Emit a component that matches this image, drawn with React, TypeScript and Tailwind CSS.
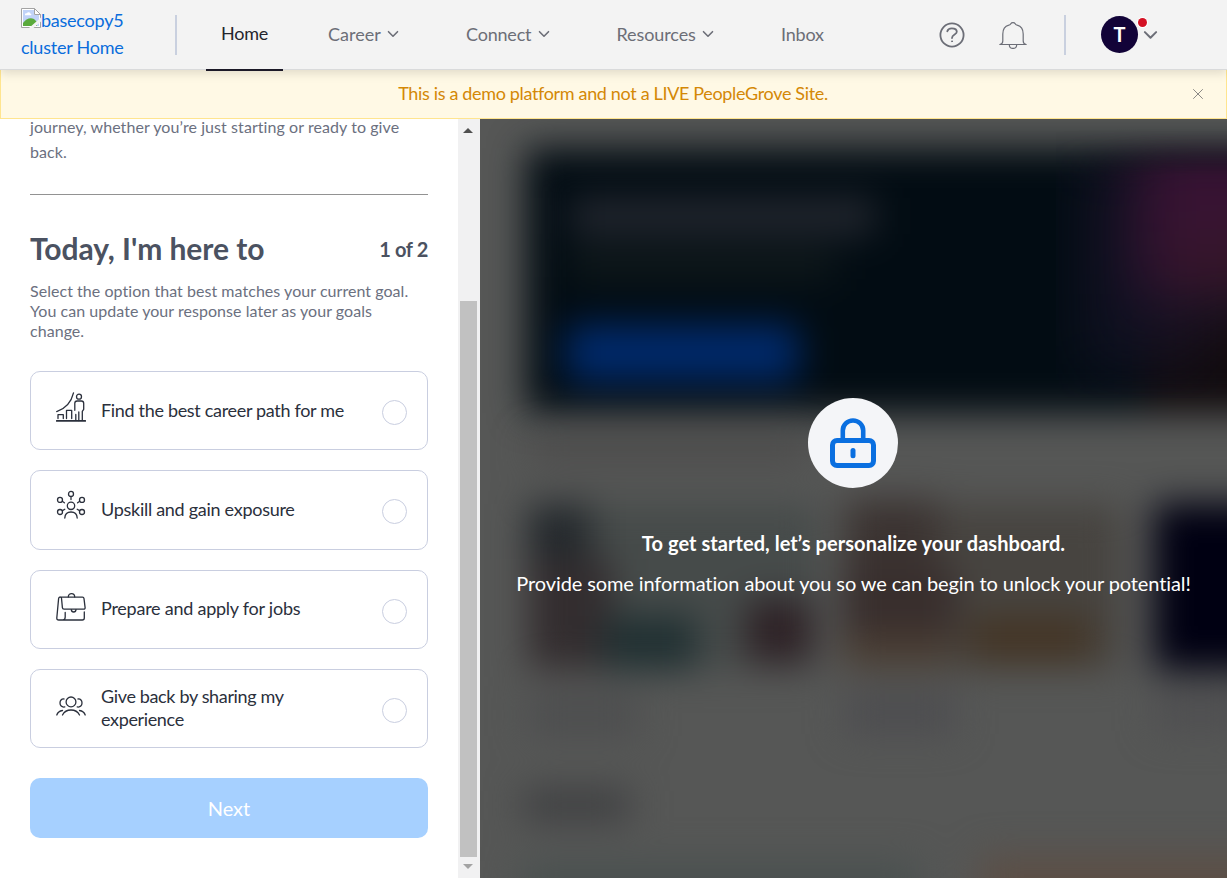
import React from "react";

const stroke = {
  fill: "none",
  stroke: "currentColor",
  strokeWidth: 1.3,
  strokeLinecap: "round" as const,
  strokeLinejoin: "round" as const,
};

function Chevron({ className, width = 1.6 }: { className: string; width?: number }) {
  return (
    <svg viewBox="0 0 12 8" className={className} {...stroke} strokeWidth={width}>
      <path d="M1.5 1.7 6 6.2l4.5-4.5" />
    </svg>
  );
}

function BrokenImage() {
  return (
    <svg viewBox="0 0 20 20" className="relative top-px inline-block h-5 w-5 align-baseline">
      <path d="M.5 .5h13l6 6v13H.5z" fill="#fff" stroke="#a3a3a3" />
      <path d="M2 2h11v5h5v11H2z" fill="#c1d3f8" />
      <path d="M4 6.500c0-1 1-1.500 2-1.200C6.500 3.800 9 4 9.200 5.500c1 0 1.500 1 .8 1.800H4z" fill="#fff" />
      <path d="M2 18v-3c3-4 7-6 11-4l3 3v4z" fill="#5aaa3c" />
      <path d="M8 20 20 9.500v4L12.500 20z" fill="#f3f3f3" />
      <path d="M13.500 .5v6h6z" fill="#fff" stroke="#a3a3a3" />
    </svg>
  );
}

function HelpIcon() {
  return (
    <svg viewBox="0 0 26 26" className="h-[26px] w-[26px]" {...stroke} strokeWidth={1.8}>
      <circle cx="13" cy="13" r="11.600" />
      <path d="M8.300 9.300c.5-2 2.300-3 4.500-3 2.700 0 5 1.300 5 3.500 0 3-4.800 2.600-4.800 6.200" />
      <circle cx="13" cy="19.300" r=".5" fill="currentColor" strokeWidth="1" />
    </svg>
  );
}

function BellIcon() {
  return (
    <svg viewBox="0 0 28 28" className="h-7 w-7" {...stroke} strokeWidth={1.2}>
      <path d="M.8 23.500c2-.3 3-1.500 3-3.500v-7c0-4.500 2-7.700 6-8.800 1.200-.4 1.700-.8 2-1.500.8-1.500 3.600-1.500 4.400 0 .3.700.8 1.100 2 1.500 4 1.100 6 4.300 6 8.800v7c0 2 1 3.200 3 3.500z" />
      <path d="M10.300 23.700c.2 5 7.200 5 7.400 0" />
    </svg>
  );
}

function CareerPathIcon() {
  return (
    <svg viewBox="0 0 30 30" className="h-[30px] w-[30px]" {...stroke}>
      <path d="M.7 28.900h28.600" strokeWidth="1.700" />
      <path d="M.7 19.600C8.500 16.800 15 11.500 17.500 .8" />
      <circle cx="23" cy="4.700" r="2.500" />
      <path d="M2 26.500v-3.800h5.300v3.800M10.500 26.500V18.300h5.200v8.200" />
      <path d="M18.800 18.300v-7c0-1.500 1-2.300 2.300-2.300h4.300c1.300 0 2.300.8 2.300 2.300v6l-1.400 2v9M19.800 28v-5.500M22.800 28.500V20" />
    </svg>
  );
}

function NetworkIcon() {
  return (
    <svg viewBox="0 0 30 30" className="-mt-0.5 h-[30px] w-[30px]" {...stroke}>
      <circle cx="15" cy="15.800" r="3.700" />
      <path d="M8.800 28c.2-4 2.800-6 6.200-6s6 2 6.200 6" />
      <circle cx="15" cy="3.900" r="2.500" />
      <path d="M15 6.600v3M6.200 11.300l2.200 1.500M23.800 11.300l-2.200 1.500M6.500 20.600l2.300-1.300M23.500 20.600l-2.300-1.300" />
      <circle cx="4" cy="9.900" r="2.500" />
      <circle cx="26" cy="9.900" r="2.500" />
      <circle cx="4" cy="22" r="2.500" />
      <circle cx="26" cy="22" r="2.500" />
    </svg>
  );
}

function BriefcaseIcon() {
  return (
    <svg viewBox="0 0 30 30" className="h-[30px] w-[30px]" {...stroke}>
      <path d="M4 6.200h22.500c1 0 1.400.5 1.500 1.400l1.100 9c.1 1-.4 1.500-1.400 1.500H8c-1 0-1.500-.5-1.600-1.500L5.500 7.200" />
      <path d="M4 6.200c-.9 0-1.300.5-1.400 1.400L.8 27c-.1 1.300.6 2 1.900 2h23.600c1.300 0 2-.7 2-2v-6M9.200 21.500V26c0 1.800-.6 2.800-2.200 3" />
      <path d="M12.300 5.900c0-4.500 6.400-4.500 6.400 0M15.300 18.600c.2 3.200 4.500 3.200 4.700 0" />
    </svg>
  );
}

function PeopleIcon() {
  return (
    <svg viewBox="0 0 30 30" className="mt-0.5 h-[30px] w-[30px]" {...stroke}>
      <circle cx="15" cy="10.900" r="4.900" />
      <path d="M6.500 24c1.500-3 4.600-5 8.500-5s7 2 8.500 5" />
      <path d="M8 8c-2.600-.3-4 1.700-4 4s1.600 4.600 4.800 3.900M22 8c2.600-.3 4 1.700 4 4s-1.600 4.600-4.800 3.900" />
      <path d="M.8 24c.8-2.500 2.700-4 5.700-4.500M29.200 24c-.8-2.500-2.700-4-5.700-4.500" />
    </svg>
  );
}

function NavItem({ label, className, chevron = true }: { label: string; className: string; chevron?: boolean }) {
  return (
    <a className={`flex items-center whitespace-nowrap ${className}`}>
      {label}
      {chevron && <Chevron className="ml-[6.500px] h-2 w-3" />}
    </a>
  );
}

const goals = [
  { label: "Find the best career path for me", icon: <CareerPathIcon />, tracking: "tracking-[-0.32px]" },
  { label: "Upskill and gain exposure", icon: <NetworkIcon />, tracking: "tracking-[-0.28px]" },
  { label: "Prepare and apply for jobs", icon: <BriefcaseIcon />, tracking: "tracking-[-0.24px]" },
  { label: "Give back by sharing my experience", icon: <PeopleIcon />, tracking: "tracking-[-0.35px]" },
];

function DashboardBackdrop() {
  return (
    <svg
      className="absolute inset-0 h-full w-full"
      viewBox="0 0 747 759"
      preserveAspectRatio="none"
      aria-hidden="true"
    >
      <defs>
        <filter id="soft" filterUnits="userSpaceOnUse" x="-100" y="-100" width="1000" height="1000" colorInterpolationFilters="sRGB">
          <feGaussianBlur stdDeviation="18" />
        </filter>
        <filter id="softer" filterUnits="userSpaceOnUse" x="-100" y="-100" width="1000" height="1000" colorInterpolationFilters="sRGB">
          <feGaussianBlur stdDeviation="30" />
        </filter>
        <linearGradient id="fade" x1="0" y1="0" x2="0" y2="1">
          <stop offset="0" stopColor="#000" />
          <stop offset=".16" stopColor="#fff" />
          <stop offset=".9" stopColor="#fff" />
          <stop offset="1" stopColor="#000" />
        </linearGradient>
        <mask id="banner">
          <rect x="0" y="10" width="800" height="290" fill="url(#fade)" />
        </mask>
      </defs>
      <rect width="747" height="759" fill="#565756" />
      <g filter="url(#soft)">
        <rect x="46" y="29" width="800" height="265" fill="#020c13" />
        <rect x="90" y="78" width="305" height="38" fill="#22262e" />
        <rect x="90" y="130" width="265" height="30" fill="#10191b" />
        <rect x="86" y="205" width="233" height="58" rx="12" fill="#00296a" />
        <rect x="665" y="200" width="140" height="92" fill="#110b0d" />
      </g>
      <g mask="url(#banner)">
        <g filter="url(#softer)">
          <rect x="600" y="40" width="130" height="215" fill="#161327" opacity=".7" />
          <rect x="655" y="20" width="180" height="155" fill="#381334" />
          <rect x="690" y="110" width="150" height="80" fill="#35162a" />
        </g>
      </g>
      <g filter="url(#soft)">
        <rect x="50" y="320" width="280" height="20" fill="#494848" />
        <rect x="48" y="385" width="290" height="165" fill="#464b4a" />
        <rect x="48" y="385" width="62" height="65" fill="#23282c" />
        <rect x="48" y="440" width="85" height="110" fill="#332d2f" />
        <rect x="122" y="497" width="95" height="54" fill="#203032" />
        <rect x="266" y="480" width="66" height="64" fill="#2e2226" />
        <rect x="362" y="385" width="280" height="165" fill="#474440" />
        <rect x="368" y="380" width="90" height="70" fill="#3b3331" />
        <rect x="362" y="450" width="115" height="65" fill="#382e2d" />
        <rect x="362" y="515" width="110" height="32" fill="#4b3e33" />
        <rect x="490" y="497" width="122" height="46" fill="#443525" />
        <rect x="674" y="384" width="180" height="167" fill="#000012" />
        <rect x="48" y="575" width="110" height="42" fill="#4d4e4f" />
        <rect x="365" y="573" width="110" height="42" fill="#4d4d50" />
        <rect x="675" y="570" width="90" height="42" fill="#4f4f51" />
        <rect x="43" y="670" width="107" height="32" fill="#3e3f41" />
        <rect x="40" y="742" width="400" height="60" fill="#4a5150" />
        <rect x="500" y="736" width="350" height="70" fill="#5c4f46" />
      </g>
    </svg>
  );
}

export default function App() {
  return (
    <div className="flex h-[878px] w-[1227px] flex-col overflow-hidden bg-white font-['Lato',sans-serif]">
      <header className="relative z-10 flex h-[70px] shrink-0 items-start border-b border-[#d9dadb] bg-[#f3f3f3] text-lg text-[#6c6e77] shadow-[0_3px_10px_rgba(0,0,0,0.13)]">
        <a className="ml-[21px] mt-[7px] w-[120px] shrink-0 leading-[27px] tracking-[-0.24px] text-[#0a6ddc]">
          <BrokenImage />
          basecopy5 cluster Home
        </a>
        <div className="ml-[34px] mt-[15px] h-10 w-0.5 shrink-0 bg-[#c9d0df]" />
        <nav className="flex h-[71px] w-[647px] shrink-0 items-start leading-[68px]">
          <a className="ml-[29px] h-[71px] w-[77px] shrink-0 border-b-2 border-[#1c1927] text-center leading-[66px] tracking-[-0.3px] text-[#24242c]">
            Home
          </a>
          <NavItem label="Career" className="ml-[45px] w-[138px]" />
          <NavItem label="Connect" className="w-[150.500px] tracking-[-0.2px]" />
          <NavItem label="Resources" className="w-[164.500px] tracking-[-0.1px]" />
          <NavItem label="Inbox" className="tracking-[-0.2px]" chevron={false} />
        </nav>
        <div className="flex h-[69px] shrink-0 items-center">
          <div className="ml-[115px]"><HelpIcon /></div>
          <div className="ml-[34px] mt-px"><BellIcon /></div>
          <div className="ml-[37px] h-10 w-0.5 bg-[#c9d0df]" />
          <div className="relative ml-[35px] flex h-[37px] w-[37px] items-center justify-center rounded-full bg-[#120338] pb-0.5 text-xl font-bold text-white">
            T
            <span className="absolute -right-[9px] top-[2px] h-[9px] w-[9px] rounded-full bg-[#d41224] ring-1 ring-white" />
          </div>
          <Chevron className="ml-[5px] mt-px h-[10px] w-[15px]" width={1.6} />
        </div>
      </header>

      <div className="-mt-px flex h-[50px] shrink-0 items-center border border-[#ffe58f] bg-[#fff9e5] text-lg text-[#d48806]">
        <p className="-mt-0.5 flex-1 pl-[25px] text-center tracking-[-0.34px]">This is a demo platform and not a LIVE PeopleGrove Site.</p>
        <svg viewBox="0 0 10 10" className="-ml-[7px] mb-px mr-[23px] h-[10px] w-[10px] text-[#8b8985]" {...stroke} strokeWidth={1}>
          <path d="m.5 .5 9 9m0-9-9 9" />
        </svg>
      </div>

      <main className="flex h-[759px] shrink-0">
        <section className="flex w-[458px] shrink-0 flex-col overflow-hidden px-[30px] text-[#6b7080]">
          <p className="-mt-[5px] text-base leading-[25px] tracking-[0.07px]">
            journey, whether you’re just starting or ready to give back.
          </p>
          <div className="mt-[30px] h-px shrink-0 bg-[#929292]" />
          <div className="mt-[33px] flex h-10 items-center justify-between text-[#4b5261]">
            <h1 className="text-[30px] font-bold tracking-[-0.06px]">Today, I'm here to</h1>
            <span className="pt-0.5 text-xl font-bold tracking-[-0.35px]">1 of 2</span>
          </div>
          <p className="mt-[13px] w-[390px] text-base leading-5 tracking-[0.045px]">
            Select the option that best matches your current goal. You can update your response later as your goals change.
          </p>
          <div className="mt-[30px] flex flex-col gap-5">
            {goals.map((goal) => (
              <label
                key={goal.label}
                className="flex h-[79.330px] items-center rounded-[10px] border border-[#c9cee0] pl-[25px] pr-5 text-lg leading-[23px] text-[#2b303c]"
              >
                <span className="mb-[7px] mr-[15px] shrink-0">{goal.icon}</span>
                <span className={`mb-px w-[250px] ${goal.tracking}`}>{goal.label}</span>
                <span className="ml-auto mt-1 h-[25px] w-[25px] shrink-0 rounded-full border border-[#c9cee0]" />
              </label>
            ))}
          </div>
          <button className="mt-[29.600px] h-[60px] shrink-0 rounded-[10px] bg-[#a6d0ff] text-xl text-white">Next</button>
        </section>

        <div className="flex w-[22px] shrink-0 flex-col items-start bg-[#f1f1f2]">
          <svg viewBox="0 0 10 5" className="ml-[5px] mt-[9px] h-[5px] w-[10px]">
            <path d="m5 0 5 5H0z" fill="#505050" />
          </svg>
          <div className="ml-0.5 mt-[168px] h-[556px] w-[17px] bg-[#c1c1c1]" />
          <svg viewBox="0 0 10 5" className="ml-[5px] mt-[7px] h-[5px] w-[10px]">
            <path d="M0 0h10L5 5z" fill="#a3a3a3" />
          </svg>
        </div>

        <section className="relative flex w-[747px] shrink-0 flex-col items-center overflow-hidden bg-[#565756] text-white">
          <DashboardBackdrop />
          <div className="relative mr-px mt-[279px] flex h-[90px] w-[90px] items-center justify-center rounded-full bg-[#f4f5f8]">
            <svg viewBox="0 0 46 50" className="h-[50px] w-[46px]" fill="none" stroke="#0a6fe0">
              <rect x="2.500" y="22.500" width="41" height="25" rx="4.500" strokeWidth="5" />
              <path d="M12.800 22V12.500a10.200 10 0 0 1 20.400 0V22" strokeWidth="4.600" />
              <path d="M23 32.500v5.200" strokeWidth="5" strokeLinecap="round" />
            </svg>
          </div>
          <h2 className="relative mt-[40px] text-xl font-bold leading-[30px] tracking-[0.055px]">To get started, let’s personalize your dashboard.</h2>
          <p className="relative mt-[10px] whitespace-nowrap text-xl leading-[30px] tracking-[-0.11px]">
            Provide some information about you so we can begin to unlock your potential!
          </p>
        </section>
      </main>
    </div>
  );
}
